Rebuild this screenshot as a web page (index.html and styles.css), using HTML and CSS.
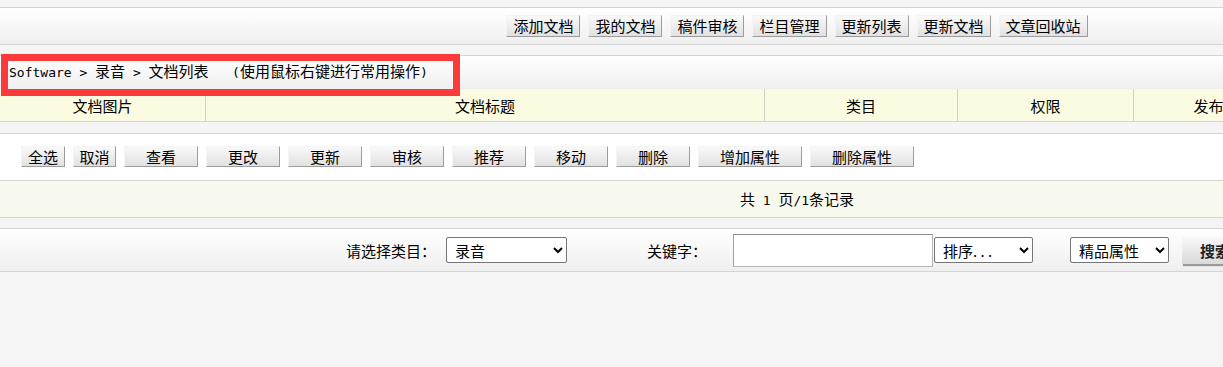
FILE: index.html
```html
<!DOCTYPE html>
<html lang="zh-CN">
<head>
<meta charset="utf-8">
<title>文档列表</title>
<link rel="stylesheet" href="styles.css">
</head>
<body>
<div class="page">
  <div class="panel toolbar">
    <button class="btn">添加文档</button>
    <button class="btn">我的文档</button>
    <button class="btn">稿件审核</button>
    <button class="btn">栏目管理</button>
    <button class="btn">更新列表</button>
    <button class="btn">更新文档</button>
    <button class="btn">文章回收站</button>
  </div>

  <div class="panel crumb"><span class="en">Software &gt; </span>录音<span class="en"> &gt; </span>文档列表<span class="en">   (</span>使用鼠标右键进行常用操作<span class="en">)</span></div>

  <div class="thead">
    <div class="th">文档图片</div>
    <div class="th">文档标题</div>
    <div class="th">类目</div>
    <div class="th">权限</div>
    <div class="th">发布时间</div>
    <div class="th">操作</div>
  </div>

  <div class="panel actions">
    <button class="btn">全选</button>
    <button class="btn w1">取消</button>
    <button class="btn w2">查看</button>
    <button class="btn w2">更改</button>
    <button class="btn w2">更新</button>
    <button class="btn w2">审核</button>
    <button class="btn w2">推荐</button>
    <button class="btn w2">移动</button>
    <button class="btn w2">删除</button>
    <button class="btn w4">增加属性</button>
    <button class="btn w4">删除属性</button>
  </div>

  <div class="pager">共<span class="en"> 1 </span>页<span class="en">/1</span>条记录</div>

  <div class="panel search">
    <span class="label">请选择类目：</span>
    <select class="sel sel-cat"><option>录音</option></select>
    <span class="label kw">关键字：</span>
    <input class="kw-input" type="text">
    <select class="sel sel-order"><option>排序. . .</option></select>
    <select class="sel sel-attr"><option>精品属性</option></select>
    <button class="search-btn">搜索</button>
  </div>
</div>
<div class="annot"></div>
</body>
</html>
```

FILE: styles.css
```css
html, body {
  margin: 0;
  padding: 0;
  overflow: hidden;
}
body {
  background: #f5f5f5;
  font-family: "Noto Sans CJK SC", "Liberation Sans", sans-serif;
  font-size: 15px;
  color: #000;
  position: relative;
  height: 367px;
}
.page {
  width: 1594px;
  padding-top: 7px;
}
.panel {
  border-top: 1px solid #d4d4d4;
  border-bottom: 1px solid #d4d4d4;
  background: linear-gradient(#ffffff, #efefef);
}
.toolbar {
  height: 36px;
  display: flex;
  align-items: center;
  justify-content: center;
  gap: 8px;
}
.btn {
  font-family: "Noto Sans CJK SC", sans-serif;
  font-size: 15px;
  line-height: 20px;
  color: #000;
  height: 22px;
  padding: 0 6px;
  border: 1px solid;
  border-color: #f4f4f4 #9c9c9c #9c9c9c #f4f4f4;
  background: linear-gradient(#f9f9f9, #e1e1e1);
  border-radius: 0;
  margin: 0;
}
.crumb {
  margin-top: 10px;
  border-bottom: none;
  height: 33px;
  line-height: 29px;
  padding-left: 9px;
  white-space: pre;
}
.en {
  font-family: "DejaVu Sans Mono", "Liberation Mono", monospace;
  font-size: 13px;
  white-space: pre;
}
.thead {
  display: grid;
  grid-template-columns: 205px 559px 193px 176px 180px 1fr;
  height: 32px;
  background: #fbfbe1;
  border-bottom: 1px solid #d4d4d4;
}
.th {
  display: flex;
  align-items: center;
  justify-content: center;
  border-left: 1px solid #d0d0c8;
}
.th:first-child {
  border-left: none;
}
.actions {
  margin-top: 11px;
  background: #ffffff;
  height: 46px;
  display: flex;
  align-items: flex-start;
  gap: 8px;
  padding-left: 21px;
}
.actions .btn {
  margin-top: 12px;
  height: 21px;
  line-height: 19px;
}
.actions .w1 { width: 43px; padding: 0; }
.actions .w2 { width: 74px; }
.actions .w4 { width: 104px; }
.pager {
  height: 36px;
  line-height: 35px;
  background: #f8f9ee;
  border-bottom: 1px solid #d4d4d4;
  text-align: center;
  white-space: pre;
}
.search {
  margin-top: 10px;
  height: 42px;
  display: flex;
  align-items: center;
  justify-content: center;
}
.label {
  margin-right: 10px;
}
.kw {
  margin-left: 80px;
  margin-right: 26px;
}
.sel {
  font-family: "Noto Sans CJK SC", sans-serif;
  font-size: 15px;
  height: 26px;
  border: 1px solid #767676;
  border-radius: 2px;
  background: #fff;
  color: #000;
  padding: 0 4px;
}
.sel-cat { width: 121px; }
.sel-order { width: 99px; margin-left: 1px; }
.sel-attr { width: 99px; margin-left: 37px; }
.kw-input {
  width: 200px;
  height: 33px;
  box-sizing: border-box;
  border: 1px solid #b5b5b5;
  border-top-color: #8e8e8e;
  border-left-color: #a0a0a0;
  background: #fff;
  margin: 0;
}
.search-btn {
  margin-left: 13px;
  width: 66px;
  height: 27px;
  font-family: "Noto Sans CJK SC", sans-serif;
  font-size: 15px;
  font-weight: bold;
  color: #222;
  border: none;
  background: linear-gradient(#f8f8f8, #dadada);
  box-shadow: 1px 2px 1px #9a9a9a;
}
.annot {
  position: absolute;
  left: 1px;
  top: 54px;
  width: 445px;
  height: 28px;
  border: 7px solid #fc3a3a;
}
```
